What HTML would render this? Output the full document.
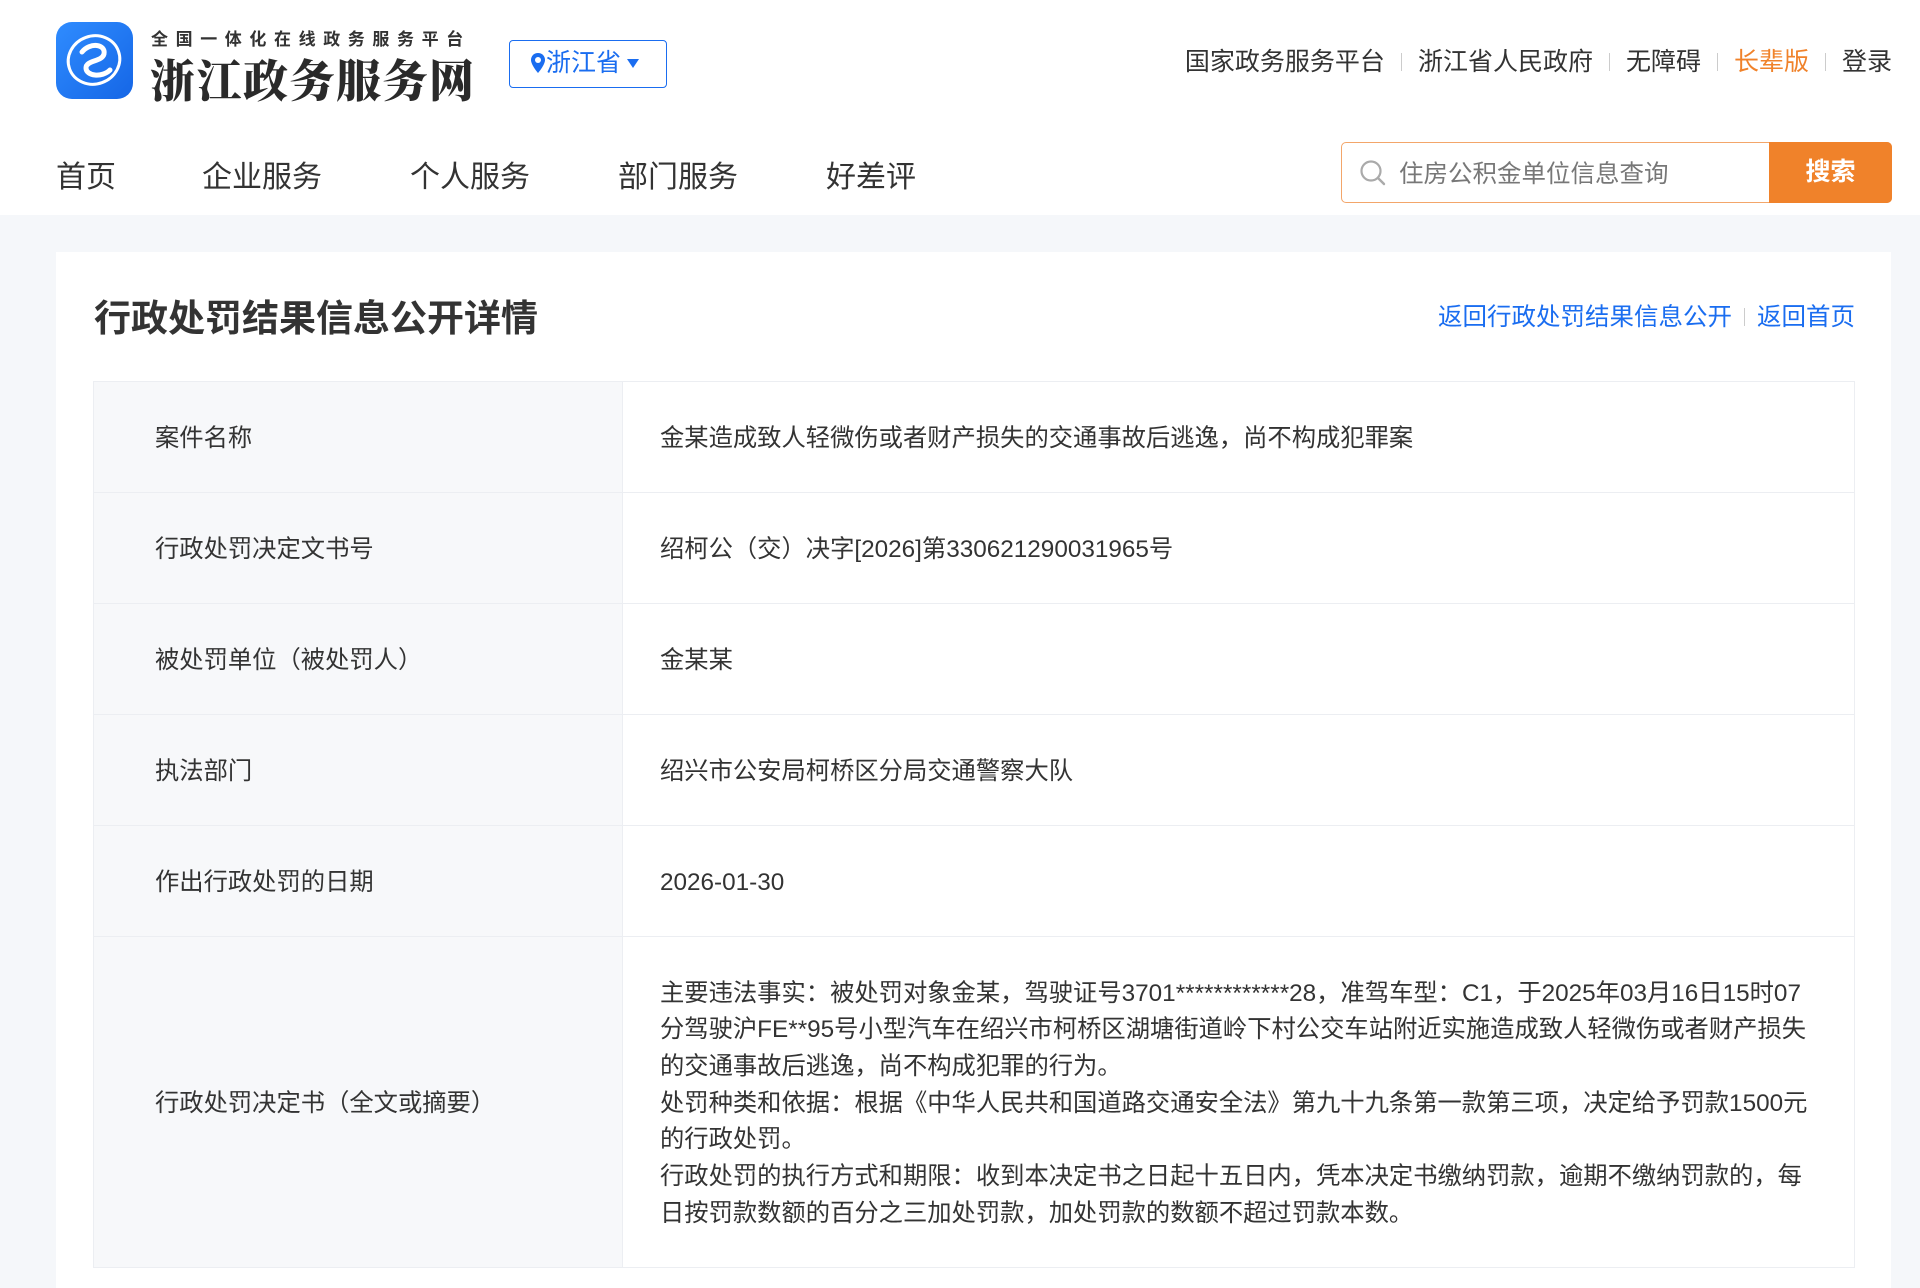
<!DOCTYPE html>
<html><head><meta charset="utf-8">
<style>
*{margin:0;padding:0;box-sizing:border-box}
html,body{width:1920px;height:1288px;overflow:hidden}
body{background:#f5f7fa;font-family:"Liberation Sans","Noto Sans CJK SC",sans-serif;color:#333;position:relative}
.hdr{position:absolute;left:0;top:0;width:1920px;height:215px;background:#fff}
.abs{position:absolute;white-space:nowrap}
.sub{left:151px;top:25px;font-size:17px;letter-spacing:7.6px;color:#333;font-weight:bold}
.ttl{left:150px;top:45px;font-size:45px;font-family:"Noto Serif CJK SC",serif;font-weight:900;color:#2a2a2a;letter-spacing:1.5px}
.prov{left:509px;top:40px;width:158px;height:48px;border:1.5px solid #1a6df0;border-radius:4px;color:#1a6df0;font-size:25px;line-height:45px;padding-left:20px}
.top{top:45px;font-size:25px;color:#333;line-height:34px}
.sep{display:inline-block;width:1px;height:18px;background:#ccc;margin:0 16px;vertical-align:-1px}
.nav{top:158px;font-size:30px;color:#333;line-height:40px}
.search{left:1341px;top:142px;width:551px;height:61px;border:1.5px solid #f3a66a;border-radius:5px;background:#fff}
.btn{position:absolute;right:-1px;top:-1px;width:123px;height:61px;background:#f0822a;border-radius:0 5px 5px 0;color:#fff;font-size:25px;font-weight:bold;text-align:center;line-height:61px}
.card{left:56px;top:252px;width:1835px;height:1036px;background:#fff}
.h1{left:94px;top:295px;font-size:37px;font-weight:bold;color:#333;line-height:48px}
.links{right:65px;top:301px;font-size:24.5px;color:#1a6df0;line-height:34px}
table{position:absolute;left:93px;top:381px;width:1762px;border-collapse:collapse}
td{border:1px solid #eceef2;font-size:24.3px;line-height:36.7px;vertical-align:middle;padding-top:4px}
td.l{width:529px;background:#f7f8fa;padding-left:61px}
td.v{padding-left:37px;white-space:nowrap}
tr.r td{height:111px}
</style></head><body>
<div class="hdr"></div>
<svg class="abs" style="left:56px;top:22px" width="77" height="77" viewBox="0 0 77 77">
<defs><linearGradient id="g" x1="0" y1="0" x2="1" y2="1"><stop offset="0" stop-color="#2f8cff"/><stop offset="1" stop-color="#1566e6"/></linearGradient></defs>
<rect width="77" height="77" rx="16" fill="url(#g)"/>
<ellipse cx="38" cy="38" rx="26" ry="24" fill="none" stroke="#fff" stroke-width="3" transform="rotate(-20 38 38)"/>
<path d="M26 30 C34 20 50 22 48 32 C46 40 30 38 30 46 C30 54 46 56 54 48" fill="none" stroke="#fff" stroke-width="5" stroke-linecap="round"/>
</svg>
<div class="abs sub">全国一体化在线政务服务平台</div>
<div class="abs ttl">浙江政务服务网</div>
<div class="abs prov"><svg width="16" height="22" viewBox="0 0 16 22" style="vertical-align:-3px"><path d="M8 1C4 1 1 4 1 8c0 5 7 13 7 13s7-8 7-13c0-4-3-7-7-7z" fill="#1a6df0"/><circle cx="8" cy="8" r="3" fill="#fff"/></svg>浙江省<svg width="14" height="12" viewBox="0 0 14 12" style="margin-left:5px;vertical-align:2px"><path d="M1 2h12L7 11z" fill="#1a6df0"/></svg></div>
<div class="abs top" style="right:28px">国家政务服务平台<span class="sep"></span>浙江省人民政府<span class="sep"></span>无障碍<span class="sep"></span><span style="color:#f0822a">长辈版</span><span class="sep"></span>登录</div>
<div class="abs nav" style="left:56px">首页</div>
<div class="abs nav" style="left:202px">企业服务</div>
<div class="abs nav" style="left:410px">个人服务</div>
<div class="abs nav" style="left:618px">部门服务</div>
<div class="abs nav" style="left:826px">好差评</div>
<div class="abs search">
<svg style="position:absolute;left:17px;top:16px" width="28" height="28" viewBox="0 0 28 28"><circle cx="12" cy="12" r="9.5" fill="none" stroke="#aaa" stroke-width="2.2"/><path d="M19 19l6 6" stroke="#aaa" stroke-width="2.4" stroke-linecap="round"/></svg>
<span style="position:absolute;left:57px;top:15px;font-size:24.5px;color:#777;line-height:34px">住房公积金单位信息查询</span>
<div class="btn">搜索</div></div>
<div class="abs card"></div>
<div class="abs h1">行政处罚结果信息公开详情</div>
<div class="abs links">返回行政处罚结果信息公开<span class="sep" style="margin:0 12px"></span>返回首页</div>
<table>
<tr class="r"><td class="l">案件名称</td><td class="v">金某造成致人轻微伤或者财产损失的交通事故后逃逸，尚不构成犯罪案</td></tr>
<tr class="r"><td class="l">行政处罚决定文书号</td><td class="v">绍柯公（交）决字[2026]第330621290031965号</td></tr>
<tr class="r"><td class="l">被处罚单位（被处罚人）</td><td class="v">金某某</td></tr>
<tr class="r"><td class="l">执法部门</td><td class="v">绍兴市公安局柯桥区分局交通警察大队</td></tr>
<tr class="r"><td class="l">作出行政处罚的日期</td><td class="v">2026-01-30</td></tr>
<tr><td class="l" style="height:331px">行政处罚决定书（全文或摘要）</td><td class="v">主要违法事实：被处罚对象金某，驾驶证号3701************28，准驾车型：C1，于2025年03月16日15时07<br>分驾驶沪FE**95号小型汽车在绍兴市柯桥区湖塘街道岭下村公交车站附近实施造成致人轻微伤或者财产损失<br>的交通事故后逃逸，尚不构成犯罪的行为。<br>处罚种类和依据：根据《中华人民共和国道路交通安全法》第九十九条第一款第三项，决定给予罚款1500元<br>的行政处罚。<br>行政处罚的执行方式和期限：收到本决定书之日起十五日内，凭本决定书缴纳罚款，逾期不缴纳罚款的，每<br>日按罚款数额的百分之三加处罚款，加处罚款的数额不超过罚款本数。</td></tr>
</table>
</body></html>
